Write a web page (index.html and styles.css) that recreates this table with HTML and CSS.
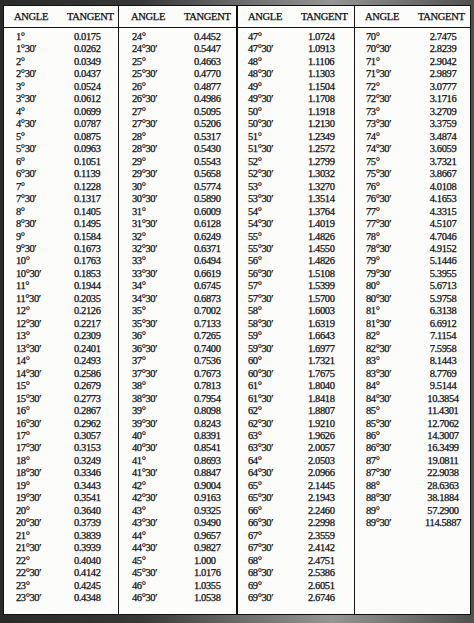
FILE: index.html
```html
<!DOCTYPE html>
<html>
<head>
<meta charset="utf-8">
<title>Tangent table</title>
<link rel="stylesheet" href="styles.css">
</head>
<body>
<div class="frame">
  <div class="table">
    <div class="col c1">
      <div class="head"><span>ANGLE</span><span>TANGENT</span></div>
      <div class="rows">
        <div class="row"><span>1°</span><span>0.0175</span></div>
        <div class="row"><span>1°30′</span><span>0.0262</span></div>
        <div class="row"><span>2°</span><span>0.0349</span></div>
        <div class="row"><span>2°30′</span><span>0.0437</span></div>
        <div class="row"><span>3°</span><span>0.0524</span></div>
        <div class="row"><span>3°30′</span><span>0.0612</span></div>
        <div class="row"><span>4°</span><span>0.0699</span></div>
        <div class="row"><span>4°30′</span><span>0.0787</span></div>
        <div class="row"><span>5°</span><span>0.0875</span></div>
        <div class="row"><span>5°30′</span><span>0.0963</span></div>
        <div class="row"><span>6°</span><span>0.1051</span></div>
        <div class="row"><span>6°30′</span><span>0.1139</span></div>
        <div class="row"><span>7°</span><span>0.1228</span></div>
        <div class="row"><span>7°30′</span><span>0.1317</span></div>
        <div class="row"><span>8°</span><span>0.1405</span></div>
        <div class="row"><span>8°30′</span><span>0.1495</span></div>
        <div class="row"><span>9°</span><span>0.1584</span></div>
        <div class="row"><span>9°30′</span><span>0.1673</span></div>
        <div class="row"><span>10°</span><span>0.1763</span></div>
        <div class="row"><span>10°30′</span><span>0.1853</span></div>
        <div class="row"><span>11°</span><span>0.1944</span></div>
        <div class="row"><span>11°30′</span><span>0.2035</span></div>
        <div class="row"><span>12°</span><span>0.2126</span></div>
        <div class="row"><span>12°30′</span><span>0.2217</span></div>
        <div class="row"><span>13°</span><span>0.2309</span></div>
        <div class="row"><span>13°30′</span><span>0.2401</span></div>
        <div class="row"><span>14°</span><span>0.2493</span></div>
        <div class="row"><span>14°30′</span><span>0.2586</span></div>
        <div class="row"><span>15°</span><span>0.2679</span></div>
        <div class="row"><span>15°30′</span><span>0.2773</span></div>
        <div class="row"><span>16°</span><span>0.2867</span></div>
        <div class="row"><span>16°30′</span><span>0.2962</span></div>
        <div class="row"><span>17°</span><span>0.3057</span></div>
        <div class="row"><span>17°30′</span><span>0.3153</span></div>
        <div class="row"><span>18°</span><span>0.3249</span></div>
        <div class="row"><span>18°30′</span><span>0.3346</span></div>
        <div class="row"><span>19°</span><span>0.3443</span></div>
        <div class="row"><span>19°30′</span><span>0.3541</span></div>
        <div class="row"><span>20°</span><span>0.3640</span></div>
        <div class="row"><span>20°30′</span><span>0.3739</span></div>
        <div class="row"><span>21°</span><span>0.3839</span></div>
        <div class="row"><span>21°30′</span><span>0.3939</span></div>
        <div class="row"><span>22°</span><span>0.4040</span></div>
        <div class="row"><span>22°30′</span><span>0.4142</span></div>
        <div class="row"><span>23°</span><span>0.4245</span></div>
        <div class="row"><span>23°30′</span><span>0.4348</span></div>
      </div>
    </div>
    <div class="col c2">
      <div class="head"><span>ANGLE</span><span>TANGENT</span></div>
      <div class="rows">
        <div class="row"><span>24°</span><span>0.4452</span></div>
        <div class="row"><span>24°30′</span><span>0.5447</span></div>
        <div class="row"><span>25°</span><span>0.4663</span></div>
        <div class="row"><span>25°30′</span><span>0.4770</span></div>
        <div class="row"><span>26°</span><span>0.4877</span></div>
        <div class="row"><span>26°30′</span><span>0.4986</span></div>
        <div class="row"><span>27°</span><span>0.5095</span></div>
        <div class="row"><span>27°30′</span><span>0.5206</span></div>
        <div class="row"><span>28°</span><span>0.5317</span></div>
        <div class="row"><span>28°30′</span><span>0.5430</span></div>
        <div class="row"><span>29°</span><span>0.5543</span></div>
        <div class="row"><span>29°30′</span><span>0.5658</span></div>
        <div class="row"><span>30°</span><span>0.5774</span></div>
        <div class="row"><span>30°30′</span><span>0.5890</span></div>
        <div class="row"><span>31°</span><span>0.6009</span></div>
        <div class="row"><span>31°30′</span><span>0.6128</span></div>
        <div class="row"><span>32°</span><span>0.6249</span></div>
        <div class="row"><span>32°30′</span><span>0.6371</span></div>
        <div class="row"><span>33°</span><span>0.6494</span></div>
        <div class="row"><span>33°30′</span><span>0.6619</span></div>
        <div class="row"><span>34°</span><span>0.6745</span></div>
        <div class="row"><span>34°30′</span><span>0.6873</span></div>
        <div class="row"><span>35°</span><span>0.7002</span></div>
        <div class="row"><span>35°30′</span><span>0.7133</span></div>
        <div class="row"><span>36°</span><span>0.7265</span></div>
        <div class="row"><span>36°30′</span><span>0.7400</span></div>
        <div class="row"><span>37°</span><span>0.7536</span></div>
        <div class="row"><span>37°30′</span><span>0.7673</span></div>
        <div class="row"><span>38°</span><span>0.7813</span></div>
        <div class="row"><span>38°30′</span><span>0.7954</span></div>
        <div class="row"><span>39°</span><span>0.8098</span></div>
        <div class="row"><span>39°30′</span><span>0.8243</span></div>
        <div class="row"><span>40°</span><span>0.8391</span></div>
        <div class="row"><span>40°30′</span><span>0.8541</span></div>
        <div class="row"><span>41°</span><span>0.8693</span></div>
        <div class="row"><span>41°30′</span><span>0.8847</span></div>
        <div class="row"><span>42°</span><span>0.9004</span></div>
        <div class="row"><span>42°30′</span><span>0.9163</span></div>
        <div class="row"><span>43°</span><span>0.9325</span></div>
        <div class="row"><span>43°30′</span><span>0.9490</span></div>
        <div class="row"><span>44°</span><span>0.9657</span></div>
        <div class="row"><span>44°30′</span><span>0.9827</span></div>
        <div class="row"><span>45°</span><span>1.000</span></div>
        <div class="row"><span>45°30′</span><span>1.0176</span></div>
        <div class="row"><span>46°</span><span>1.0355</span></div>
        <div class="row"><span>46°30′</span><span>1.0538</span></div>
      </div>
    </div>
    <div class="col c3">
      <div class="head"><span>ANGLE</span><span>TANGENT</span></div>
      <div class="rows">
        <div class="row"><span>47°</span><span>1.0724</span></div>
        <div class="row"><span>47°30′</span><span>1.0913</span></div>
        <div class="row"><span>48°</span><span>1.1106</span></div>
        <div class="row"><span>48°30′</span><span>1.1303</span></div>
        <div class="row"><span>49°</span><span>1.1504</span></div>
        <div class="row"><span>49°30′</span><span>1.1708</span></div>
        <div class="row"><span>50°</span><span>1.1918</span></div>
        <div class="row"><span>50°30′</span><span>1.2130</span></div>
        <div class="row"><span>51°</span><span>1.2349</span></div>
        <div class="row"><span>51°30′</span><span>1.2572</span></div>
        <div class="row"><span>52°</span><span>1.2799</span></div>
        <div class="row"><span>52°30′</span><span>1.3032</span></div>
        <div class="row"><span>53°</span><span>1.3270</span></div>
        <div class="row"><span>53°30′</span><span>1.3514</span></div>
        <div class="row"><span>54°</span><span>1.3764</span></div>
        <div class="row"><span>54°30′</span><span>1.4019</span></div>
        <div class="row"><span>55°</span><span>1.4826</span></div>
        <div class="row"><span>55°30′</span><span>1.4550</span></div>
        <div class="row"><span>56°</span><span>1.4826</span></div>
        <div class="row"><span>56°30′</span><span>1.5108</span></div>
        <div class="row"><span>57°</span><span>1.5399</span></div>
        <div class="row"><span>57°30′</span><span>1.5700</span></div>
        <div class="row"><span>58°</span><span>1.6003</span></div>
        <div class="row"><span>58°30′</span><span>1.6319</span></div>
        <div class="row"><span>59°</span><span>1.6643</span></div>
        <div class="row"><span>59°30′</span><span>1.6977</span></div>
        <div class="row"><span>60°</span><span>1.7321</span></div>
        <div class="row"><span>60°30′</span><span>1.7675</span></div>
        <div class="row"><span>61°</span><span>1.8040</span></div>
        <div class="row"><span>61°30′</span><span>1.8418</span></div>
        <div class="row"><span>62°</span><span>1.8807</span></div>
        <div class="row"><span>62°30′</span><span>1.9210</span></div>
        <div class="row"><span>63°</span><span>1.9626</span></div>
        <div class="row"><span>63°30′</span><span>2.0057</span></div>
        <div class="row"><span>64°</span><span>2.0503</span></div>
        <div class="row"><span>64°30′</span><span>2.0966</span></div>
        <div class="row"><span>65°</span><span>2.1445</span></div>
        <div class="row"><span>65°30′</span><span>2.1943</span></div>
        <div class="row"><span>66°</span><span>2.2460</span></div>
        <div class="row"><span>66°30′</span><span>2.2998</span></div>
        <div class="row"><span>67°</span><span>2.3559</span></div>
        <div class="row"><span>67°30′</span><span>2.4142</span></div>
        <div class="row"><span>68°</span><span>2.4751</span></div>
        <div class="row"><span>68°30′</span><span>2.5386</span></div>
        <div class="row"><span>69°</span><span>2.6051</span></div>
        <div class="row"><span>69°30′</span><span>2.6746</span></div>
      </div>
    </div>
    <div class="col c4">
      <div class="head"><span>ANGLE</span><span>TANGENT</span></div>
      <div class="rows">
        <div class="row"><span>70°</span><span>2.7475</span></div>
        <div class="row"><span>70°30′</span><span>2.8239</span></div>
        <div class="row"><span>71°</span><span>2.9042</span></div>
        <div class="row"><span>71°30′</span><span>2.9897</span></div>
        <div class="row"><span>72°</span><span>3.0777</span></div>
        <div class="row"><span>72°30′</span><span>3.1716</span></div>
        <div class="row"><span>73°</span><span>3.2709</span></div>
        <div class="row"><span>73°30′</span><span>3.3759</span></div>
        <div class="row"><span>74°</span><span>3.4874</span></div>
        <div class="row"><span>74°30′</span><span>3.6059</span></div>
        <div class="row"><span>75°</span><span>3.7321</span></div>
        <div class="row"><span>75°30′</span><span>3.8667</span></div>
        <div class="row"><span>76°</span><span>4.0108</span></div>
        <div class="row"><span>76°30′</span><span>4.1653</span></div>
        <div class="row"><span>77°</span><span>4.3315</span></div>
        <div class="row"><span>77°30′</span><span>4.5107</span></div>
        <div class="row"><span>78°</span><span>4.7046</span></div>
        <div class="row"><span>78°30′</span><span>4.9152</span></div>
        <div class="row"><span>79°</span><span>5.1446</span></div>
        <div class="row"><span>79°30′</span><span>5.3955</span></div>
        <div class="row"><span>80°</span><span>5.6713</span></div>
        <div class="row"><span>80°30′</span><span>5.9758</span></div>
        <div class="row"><span>81°</span><span>6.3138</span></div>
        <div class="row"><span>81°30′</span><span>6.6912</span></div>
        <div class="row"><span>82°</span><span>7.1154</span></div>
        <div class="row"><span>82°30′</span><span>7.5958</span></div>
        <div class="row"><span>83°</span><span>8.1443</span></div>
        <div class="row"><span>83°30′</span><span>8.7769</span></div>
        <div class="row"><span>84°</span><span>9.5144</span></div>
        <div class="row"><span>84°30′</span><span>10.3854</span></div>
        <div class="row"><span>85°</span><span>11.4301</span></div>
        <div class="row"><span>85°30′</span><span>12.7062</span></div>
        <div class="row"><span>86°</span><span>14.3007</span></div>
        <div class="row"><span>86°30′</span><span>16.3499</span></div>
        <div class="row"><span>87°</span><span>19.0811</span></div>
        <div class="row"><span>87°30′</span><span>22.9038</span></div>
        <div class="row"><span>88°</span><span>28.6363</span></div>
        <div class="row"><span>88°30′</span><span>38.1884</span></div>
        <div class="row"><span>89°</span><span>57.2900</span></div>
        <div class="row"><span>89°30′</span><span>114.5887</span></div>
      </div>
    </div>
  </div>
</div>
</body>
</html>
```

FILE: styles.css
```css
html, body {
  margin: 0;
  padding: 0;
}
body {
  width: 474px;
  height: 623px;
  overflow: hidden;
  background: linear-gradient(90deg, #2a2a2a 0%, #383838 30%, #6a6a6a 50%, #959595 70%, #505050 100%);
  font-family: "Liberation Serif", "Times New Roman", serif;
  color: #0d0d0d;
}
.frame {
  padding: 5px 3px 0 3px;
}
.table {
  box-sizing: border-box;
  height: 610px;
  background: #fcfcfb;
  border: 1px solid #111;
  display: grid;
  grid-template-columns: 115px 119px 117px 1fr;
  font-size: 10.5px;
  letter-spacing: -0.4px;
  -webkit-text-stroke: 0.25px #0d0d0d;
}
.col {
  display: flex;
  flex-direction: column;
  border-right: 1px solid #161616;
}
.col.c2 {
  border-right: 2px solid #0d0d0d;
}
.col.c4 {
  border-right: none;
}
.head {
  height: 21px;
  border-bottom: 1px solid #161616;
  display: grid;
  grid-template-columns: 53px auto;
  align-items: center;
  padding-left: 10px;
  letter-spacing: -0.3px;
}
.c2 .head {
  padding-left: 12px;
}
.rows {
  padding-top: 3px;
  display: flex;
  flex-direction: column;
}
.row {
  height: 12.47px;
  line-height: 12.47px;
  display: grid;
  grid-template-columns: 58px auto;
  padding-left: 12px;
  white-space: nowrap;
}
.c2 .row {
  padding-left: 13px;
  grid-template-columns: 62px auto;
}
.c3 .row {
  padding-left: 10px;
  grid-template-columns: 60px auto;
}
.c4 .row {
  padding-left: 11px;
  grid-template-columns: 55px 44px;
}
.c4 .row span:last-child {
  text-align: center;
}
```
